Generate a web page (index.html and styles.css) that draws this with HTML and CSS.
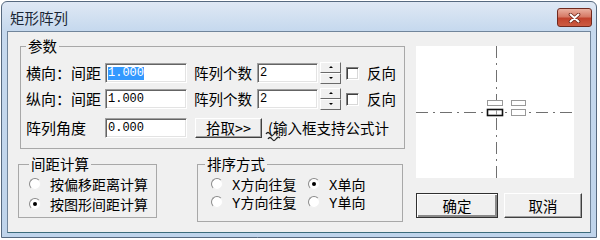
FILE: index.html
```html
<!DOCTYPE html>
<html lang="zh-CN">
<head>
    <meta charset="UTF-8">
    <title>矩形阵列</title>
    <link rel="stylesheet" href="styles.css">
</head>
<body>
    <div class="window">
        <!-- Title bar -->
        <div class="titlebar">
            <span class="title">矩形阵列</span>
            <button class="close">
                <svg width="13" height="10" viewBox="0 0 13 10">
                    <path d="M2.5 1.5 L10.5 8.5 M10.5 1.5 L2.5 8.5" stroke="#6b2418" stroke-width="3.6" stroke-linecap="round"/>
                    <path d="M2.5 1.5 L10.5 8.5 M10.5 1.5 L2.5 8.5" stroke="#fff" stroke-width="2" stroke-linecap="round"/>
                </svg>
            </button>
        </div>

        <div class="client">
            <div class="main">
                <fieldset class="group params">
                    <legend>参数</legend>
                    <div class="row">
                        <span class="label">横向：间距</span>
                        <span class="field wide"><span class="sel">1.000</span></span>
                        <span class="label2">阵列个数</span>
                        <span class="field narrow">2</span>
                        <span class="spin"><i class="up"></i><i class="down"></i></span>
                        <span class="check"></span>
                        <span class="check-text">反向</span>
                    </div>
                    <div class="row">
                        <span class="label">纵向：间距</span>
                        <span class="field wide">1.000</span>
                        <span class="label2">阵列个数</span>
                        <span class="field narrow">2</span>
                        <span class="spin"><i class="up"></i><i class="down"></i></span>
                        <span class="check"></span>
                        <span class="check-text">反向</span>
                    </div>
                    <div class="row row-last">
                        <span class="label">阵列角度</span>
                        <span class="field wide">0.000</span>
                        <button class="pick">拾取&gt;&gt;</button>
                        <span class="note">(输入框支持公式计
                            <svg class="cursor" width="18" height="12" viewBox="0 0 18 12">
                                <path d="M1 4 Q3 1 5 4 T9 4 T13 4 M3 9 Q5 6 7 9 T11 9 T15 8" stroke="#222" stroke-width="1.3" fill="none"/>
                            </svg>
                        </span>
                    </div>
                </fieldset>

                <div class="bottom">
                    <fieldset class="group spacing">
                        <legend>间距计算</legend>
                        <label class="radio"><span class="dot"></span>按偏移距离计算</label>
                        <label class="radio"><span class="dot on"></span>按图形间距计算</label>
                    </fieldset>

                    <fieldset class="group order">
                        <legend>排序方式</legend>
                        <div class="order-grid">
                            <label class="radio"><span class="dot"></span>X方向往复</label>
                            <label class="radio"><span class="dot on"></span>X单向</label>
                            <label class="radio"><span class="dot"></span>Y方向往复</label>
                            <label class="radio"><span class="dot"></span>Y单向</label>
                        </div>
                    </fieldset>
                </div>
            </div>

            <div class="side">
                <div class="preview">
                    <svg width="158" height="132" viewBox="0 0 158 132">
                        <line x1="80.5" y1="0" x2="80.5" y2="132" stroke="#707070" stroke-dasharray="12 5 2 5"/>
                        <line x1="0" y1="66.5" x2="158" y2="66.5" stroke="#707070" stroke-dasharray="12 5 2 5"/>
                        <rect x="71.5" y="54.5" width="15" height="5" fill="#fff" stroke="#999"/>
                        <rect x="95.5" y="54.5" width="14" height="5" fill="#fff" stroke="#999"/>
                        <rect x="95.5" y="63.5" width="14" height="6" fill="#fff" stroke="#999"/>
                        <rect x="71.5" y="63.5" width="15" height="6" fill="#fff" stroke="#111" stroke-width="1.6"/>
                        <line x1="80.5" y1="64" x2="80.5" y2="69" stroke="#999"/>
                    </svg>
                </div>
                <div class="buttons">
                    <button class="btn default">确定</button>
                    <button class="btn cancel">取消</button>
                </div>
            </div>
        </div>
    </div>
</body>
</html>
```

FILE: styles.css
```css
body {
    margin: 0;
    background: #fff;
    font-family: "Noto Sans CJK SC", sans-serif;
    font-size: 14.5px;
    color: #000;
}

.window {
    box-sizing: border-box;
    width: 596px;
    height: 237px;
    margin: 1px 0 0 1px;
    border: 1px solid #56697f;
    border-radius: 6px 6px 0 0;
    background: linear-gradient(#dfe8f4, #c6d9ee 28px, #bfd4eb);
    display: flex;
    flex-direction: column;
}

.titlebar {
    height: 29px;
    display: flex;
    align-items: flex-start;
    padding-left: 8px;
}

.title {
    margin-top: 8px;
    line-height: 16px;
    color: #1b2735;
}

.close {
    margin: 6px 4px 0 auto;
    width: 35px;
    height: 19px;
    padding: 0;
    border: 1px solid #70291e;
    border-radius: 3px;
    background: linear-gradient(#eab0a0, #d67a66 45%, #c1432d 55%, #cc5b42);
    display: flex;
    align-items: center;
    justify-content: center;
}

.client {
    flex: 1;
    margin: 0 5px 4px;
    border: 1px solid #71859b;
    border-bottom-color: #3c6c7c;
    background: #f0f0f0;
    display: flex;
}

.main {
    width: 397px;
    box-sizing: border-box;
    padding: 5px 0 0 10px;
}

.group {
    margin: 0;
    min-width: 0;
    box-sizing: border-box;
    border: 1px solid #a8a8a8;
}

.group legend {
    padding: 0 2px;
    line-height: 18px;
}

/* 参数 */
.params {
    width: 385px;
    margin-left: 2px;
    padding: 8px 0 10px 5px;
}

.row {
    display: flex;
    align-items: center;
    height: 20px;
    line-height: 20px;
    white-space: nowrap;
}

.row + .row {
    margin-top: 6px;
}

.row.row-last {
    margin-top: 9px;
}

.label {
    width: 79px;
    font-size: 15px;
}

.label2 {
    width: 63px;
    margin-left: 7px;
    font-size: 14.5px;
}

.field {
    box-sizing: border-box;
    height: 20px;
    background: #fff;
    border: 1px solid;
    border-color: #a0a0a0 #fff #fff #a0a0a0;
    box-shadow: inset 1px 1px #646464, inset -1px -1px #e3e3e3;
    padding-left: 2px;
    font-family: "Liberation Mono", monospace;
    font-size: 12px;
    line-height: 18px;
}

.field.wide {
    width: 82px;
}

.field.narrow {
    width: 61px;
}

.sel {
    background: #3399ff;
    color: #fff;
    display: inline-block;
    line-height: 13px;
}

.spin {
    margin-left: 2px;
    width: 21px;
    height: 22px;
    display: flex;
    flex-direction: column;
}

.spin i {
    flex: 1;
    box-sizing: border-box;
    background: #f0f0f0;
    border: 1px solid;
    border-color: #fff #6a6a6a #6a6a6a #fff;
    position: relative;
}

.spin i::after {
    content: "";
    position: absolute;
    left: 8px;
    top: 3px;
    border-left: 2px solid transparent;
    border-right: 2px solid transparent;
}

.spin .up::after {
    border-bottom: 2px solid #000;
}

.spin .down::after {
    border-top: 2px solid #000;
}

.check {
    margin-left: 5px;
    width: 13px;
    height: 13px;
    box-sizing: border-box;
    background: #fff;
    border: 1px solid;
    border-color: #808080 #fff #fff #808080;
    box-shadow: inset 1px 1px #404040, inset -1px -1px #d8d8d8;
}

.check-text {
    margin-left: 8px;
}

.pick {
    margin-left: 8px;
    width: 67px;
    height: 20px;
    padding: 0;
    font-family: inherit;
    font-size: 14.5px;
    line-height: 16px;
    background: #f0f0f0;
    border: 1px solid;
    border-color: #fff #404040 #404040 #fff;
    box-shadow: inset -1px -1px #a0a0a0;
}

.note {
    margin-left: 6px;
    position: relative;
}

.note .cursor {
    position: absolute;
    left: -3px;
    top: 12px;
}

/* 间距计算 / 排序方式 */
.bottom {
    display: flex;
    align-items: flex-start;
    margin-top: 6px;
}

.spacing {
    width: 139px;
    padding: 2px 0 4px 10px;
}

.spacing .radio + .radio {
    margin-top: 2px;
}

.order {
    width: 206px;
    margin-left: 40px;
    padding: 2px 0 10px 13px;
}

.order legend {
    margin-left: -6px;
}

.order-grid {
    display: grid;
    grid-template-columns: 97px 80px;
    grid-auto-rows: 18px;
}

.radio {
    display: flex;
    align-items: center;
    height: 18px;
    font-size: 14px;
    font-family: "Liberation Mono", "Noto Sans CJK SC", monospace;
    white-space: nowrap;
}

.dot {
    width: 12px;
    height: 12px;
    box-sizing: border-box;
    border-radius: 50%;
    border: 1px solid;
    border-color: #8a8a8a #f0f0f0 #f0f0f0 #8a8a8a;
    background: #fff;
    margin-right: 9px;
    position: relative;
}

.dot.on::after {
    content: "";
    position: absolute;
    left: 3px;
    top: 3px;
    width: 4px;
    height: 4px;
    border-radius: 50%;
    background: #000;
}

/* 预览 + 按钮 */
.side {
    margin-left: 11px;
    padding-top: 14px;
}

.preview {
    width: 158px;
    height: 132px;
    background: #fff;
}

.preview svg {
    display: block;
}

.buttons {
    display: flex;
    gap: 6px;
    margin-top: 15px;
}

.btn {
    height: 25px;
    padding: 0;
    font-family: inherit;
    font-size: 14.5px;
    background: #f0f0f0;
    border: 1px solid;
    border-color: #fff #404040 #404040 #fff;
    box-shadow: inset -1px -1px #a0a0a0;
}

.btn.default {
    width: 82px;
    border-color: #303030;
    box-shadow: inset 1px 1px #fff, inset -2px -2px #8a8a8a;
}

.btn.cancel {
    width: 78px;
}
```
